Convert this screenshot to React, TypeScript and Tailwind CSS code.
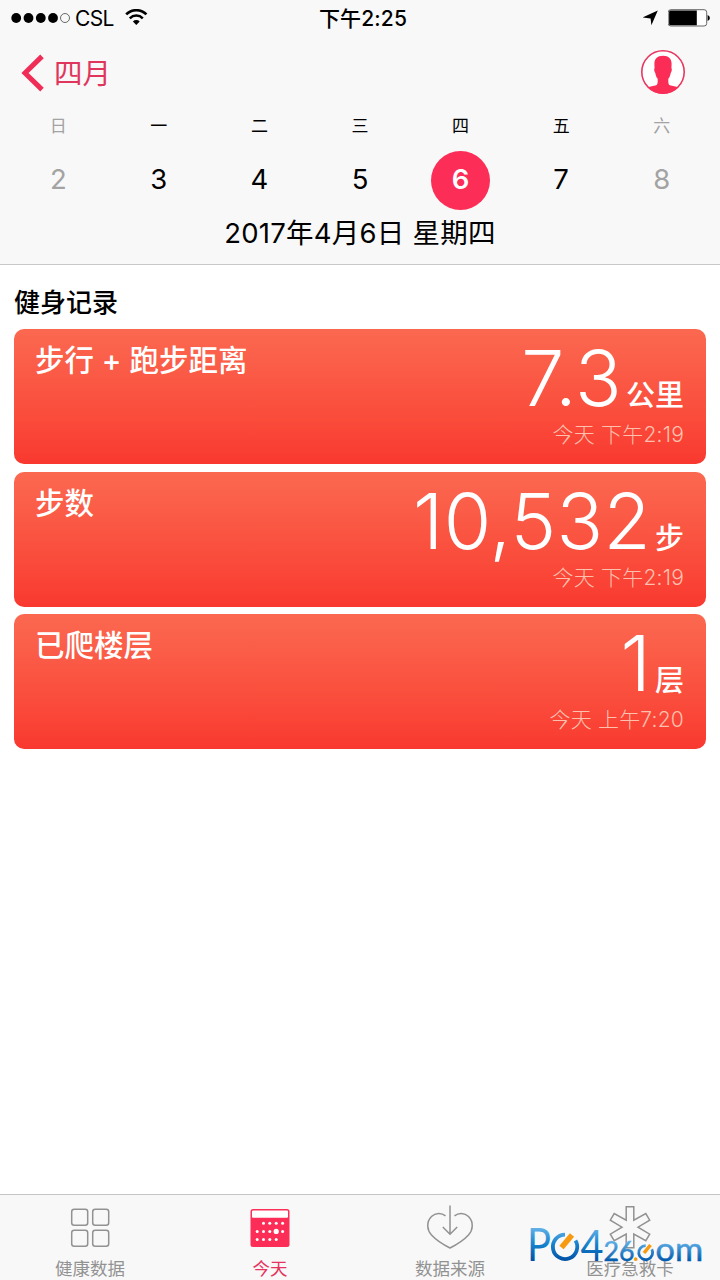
import type { ReactNode } from "react";
import clsx from "clsx";

interface Day {
  name: string;
  date: number;
  weekend?: boolean;
  selected?: boolean;
}

interface Metric {
  label: string;
  value: string;
  unit: string;
  time: string;
}

const days: Day[] = [
  { name: "日", date: 2, weekend: true },
  { name: "一", date: 3 },
  { name: "二", date: 4 },
  { name: "三", date: 5 },
  { name: "四", date: 6, selected: true },
  { name: "五", date: 7 },
  { name: "六", date: 8, weekend: true },
];

const metrics: Metric[] = [
  { label: "步行 + 跑步距离", value: "7.3", unit: "公里", time: "今天 下午2:19" },
  { label: "步数", value: "10,532", unit: "步", time: "今天 下午2:19" },
  { label: "已爬楼层", value: "1", unit: "层", time: "今天 上午7:20" },
];

function StatusBar() {
  return (
    <div className="grid h-9 grid-cols-3 items-center pr-[9px] pl-[11px] text-black">
      <div className="flex items-center">
        <svg width="60" height="12" viewBox="0 0 60 12">
          {[5.2, 17.5, 29.8, 42].map((cx) => (
            <circle key={cx} cx={cx} cy="6" r="4.9" />
          ))}
          <circle cx="54" cy="6" r="4.5" fill="none" stroke="#444" strokeWidth="0.8" />
        </svg>
        <span className="ml-1 text-[21px] leading-none tracking-[-0.6px]">CSL</span>
        <svg className="ml-[11px]" width="23" height="18" viewBox="0 0 23 18" fill="none" stroke="#000">
          <path d="M1.2 5.4a14.3 14.3 0 0 1 20.2 0" strokeWidth="2.7" />
          <path d="M4.8 9.3a9.2 9.2 0 0 1 13 0" strokeWidth="2.5" />
          <path d="M11.3 16L7.9 12.5a4.8 4.8 0 0 1 6.8 0Z" fill="#000" stroke="none" />
        </svg>
      </div>
      <div className="pl-1 text-center text-[21px] leading-none font-medium tracking-[0.15px] whitespace-nowrap">
        下午2:25
      </div>
      <div className="flex items-center justify-end">
        <svg width="16" height="16" viewBox="0 0 16 16">
          <path d="M14.8 0.5L8.4 15.3L7.6 8.6L-0.6 7.4Z" />
        </svg>
        <svg className="ml-[9px]" width="43" height="18" viewBox="0 0 43 18">
          <rect x="0.2" y="0.7" width="38.5" height="16.3" rx="2.6" fill="#fff" stroke="#555" strokeWidth="0.9" />
          <path d="M2.5 1.5h26.3v14.8H2.5a1.4 1.4 0 0 1-1.4-1.4V2.9A1.4 1.4 0 0 1 2.5 1.5Z" />
          <path d="M39.6 6q2.3 0.8 2.3 3t-2.3 3Z" />
        </svg>
      </div>
    </div>
  );
}

function NavBar() {
  return (
    <div className="flex h-[72px] items-center justify-between pr-[34px] pl-[21px] text-[#e0355d]">
      <div className="flex items-center pt-0.5">
        <svg width="24" height="38" viewBox="0 0 24 38" fill="none" stroke="#ef2d57" strokeWidth="5">
          <path d="M21 2.4L4 19L21 35.6" />
        </svg>
        <span className="ml-[9px] pt-[3px] text-[28.5px] leading-none">四月</span>
      </div>
      <svg width="46" height="46" viewBox="0 0 46 46">
        <circle cx="23" cy="23" r="21.2" fill="#fff" stroke="#e8375f" strokeWidth="1.6" />
        <path
          fill="#fb2d57"
          d="M23 6.8c-5.8 0-8.7 3.2-8.6 8.4l.2 4.1c-.7 0-.5 3.3.7 4.6.4 2.6 1.2 4.4 2.3 5.7.3 3.5.1 5.8-1.4 6.7L7.4 38.2A21.5 21.5 0 0 0 38.6 38.2L29.8 36.3c-1.5-.9-1.7-3.2-1.4-6.7 1.1-1.3 1.9-3.1 2.3-5.7 1.2-1.3 1.4-4.6.7-4.6l.2-4.1c.1-5.2-2.8-8.4-8.6-8.4Z"
        />
      </svg>
    </div>
  );
}

function WeekStrip() {
  return (
    <div className="grid grid-cols-7 px-2">
      {days.map((day) => (
        <div
          key={day.name}
          className={clsx("flex flex-col items-center", day.weekend ? "text-[#a3a3a3]" : "text-black")}
        >
          <span className="flex h-[43px] items-center pb-[7px] text-[17px] leading-none">{day.name}</span>
          <span
            className={clsx(
              "flex size-[59px] items-center justify-center rounded-full pb-px text-[27.5px] leading-none",
              day.selected && "bg-[#fc2d56] font-semibold text-white"
            )}
          >
            {day.date}
          </span>
        </div>
      ))}
    </div>
  );
}

function MetricCard({ label, value, unit, time }: Metric) {
  return (
    <div className="flex h-[135px] justify-between rounded-[10px] bg-linear-to-b from-[#fb6850] to-[#f9382f] pr-[22px] pl-[21px] text-white">
      <span className="mt-4 text-[29.5px] leading-[30px] font-medium">{label}</span>
      <div className="flex flex-col items-end">
        <div className="mt-2 flex h-[83px] items-baseline">
          <span className="text-[77px] leading-[82px] font-light tracking-[0.3px]">{value}</span>
          <span className="ml-1 text-[29px] leading-none font-medium">{unit}</span>
        </div>
        <span className="mt-1 text-[21px] leading-[22px] font-light tracking-[0.2px] text-[#ffc0ad]">{time}</span>
      </div>
    </div>
  );
}

function TabItem({ label, active, children }: { label: string; active?: boolean; children: ReactNode }) {
  return (
    <div className={clsx("flex flex-1 flex-col items-center", active ? "text-[#e5345e]" : "text-[#929292]")}>
      <svg className="mt-2" width="50" height="50" viewBox="0 0 50 50" fill="none" stroke="currentColor" strokeWidth="1.5">
        {children}
      </svg>
      <span className="mt-[7px] text-[17.5px] leading-[18px]">{label}</span>
    </div>
  );
}

// Rows of the calendar icon: y and the x of each dot
const calendarDots = [
  { y: 20.3, xs: [18.5, 24.8, 31.2, 37.6] },
  { y: 28.4, xs: [12.2, 18.5, 24.8, 37.6] },
  { y: 36.4, xs: [12.2, 18.5, 24.8, 31.2] },
];

function TabBar() {
  return (
    <div className="flex h-[86px] border-t border-[#c4c4c4] bg-[#f8f8f8]">
      <TabItem label="健康数据">
        <rect x="6.7" y="6.2" width="16" height="16" rx="2.5" />
        <rect x="27.7" y="6.2" width="16" height="16" rx="2.5" />
        <rect x="6.7" y="27.2" width="16" height="16" rx="2.5" />
        <rect x="27.7" y="27.2" width="16" height="16" rx="2.5" />
      </TabItem>
      <TabItem label="今天" active>
        <rect x="5.5" y="6" width="39" height="38" rx="2.5" fill="#fc2d56" stroke="none" />
        <rect x="7" y="7.5" width="36" height="7.3" rx="1" fill="#fff" stroke="none" />
        {calendarDots.map((row) =>
          row.xs.map((x) => <circle key={`${x}-${row.y}`} cx={x} cy={row.y} r="1.5" fill="#fff" stroke="none" />)
        )}
        <circle cx="31.2" cy="28.4" r="2.6" fill="#fff" stroke="none" />
      </TabItem>
      <TabItem label="数据来源">
        <path d="M20.5 12.8C16.5 9.6 10.5 9.5 6.5 13.5C1 19 2 27 6.5 32C12 38 20 42.5 25 45C30 42.5 38 38 43.5 32C48 27 49 19 43.5 13.5C39.5 9.5 33.5 9.6 29.5 12.8" />
        <path d="M25 2.5V31M17.8 24L25 31.2L32.2 24" />
      </TabItem>
      <TabItem label="医疗急救卡">
        <path d="M21.2 3.7H28.8V17.2L40.8 10.5L44.7 17.2L33 24.2L44.7 31.2L40.8 37.7L28.8 31V44.7H21.2V31L9.2 37.7L5.3 31.2L17 24.2L5.3 17.2L9.2 10.5L21.2 17.2Z" />
      </TabItem>
    </div>
  );
}

function Watermark() {
  return (
    <svg
      className="absolute right-4 bottom-3 overflow-visible font-['Lato']"
      width="178"
      height="46"
      viewBox="0 0 178 46"
    >
      <defs>
        <linearGradient id="blue" gradientUnits="userSpaceOnUse" x1="0" y1="4" x2="0" y2="39">
          <stop offset="0" stopColor="#6db7ea" />
          <stop offset="0.5" stopColor="#1884ce" />
          <stop offset="1" stopColor="#0050a4" />
        </linearGradient>
        <linearGradient id="blueSmall" gradientUnits="userSpaceOnUse" x1="0" y1="19" x2="0" y2="39">
          <stop offset="0" stopColor="#62b2e9" />
          <stop offset="1" stopColor="#0059ac" />
        </linearGradient>
      </defs>
      <g fill="url(#blue)">
        <text x="1" y="38.5" fontSize="47" textLength="24" lengthAdjust="spacingAndGlyphs">P</text>
        <text x="54.5" y="38.5" fontSize="42" textLength="23" lengthAdjust="spacingAndGlyphs">4</text>
      </g>
      <path d="M39 12.6A12.2 12.2 0 1 0 49.5 18.5" fill="none" stroke="url(#blue)" strokeWidth="3.8" />
      <path d="M35.5 25.5L46 13" stroke="#f79a10" strokeWidth="5.5" />
      <g fill="url(#blueSmall)" stroke="url(#blueSmall)" strokeWidth="0.5">
        <text x="77.5" y="38.5" fontSize="27" textLength="31" lengthAdjust="spacingAndGlyphs">26</text>
        <text x="129.5" y="38.5" fontSize="32.5" textLength="47.5" lengthAdjust="spacingAndGlyphs">om</text>
      </g>
      <text x="106.5" y="38.5" fontSize="28" fill="#f79a10">.</text>
      <path d="M119.7 23.6A7 7 0 1 0 125.8 27.2" fill="none" stroke="url(#blueSmall)" strokeWidth="2.8" />
      <path d="M118 31L124.5 23" stroke="#f79a10" strokeWidth="3.5" />
    </svg>
  );
}

export default function App() {
  return (
    <div className="relative flex h-[1280px] w-[720px] flex-col overflow-hidden bg-white font-['Inter','Noto_Sans_CJK_SC',sans-serif]">
      <header className="h-[265px] border-b border-[#c8c8c8] bg-[#f8f8f8]">
        <StatusBar />
        <NavBar />
        <WeekStrip />
        <div className="mt-[9px] text-center text-[27.5px] leading-[28px] tracking-[0.25px] text-black">
          2017年4月6日 星期四
        </div>
      </header>
      <main className="flex-1 px-3.5">
        <h2 className="mt-6 text-[26px] leading-[28px] font-medium text-black">健身记录</h2>
        <div className="mt-3 flex flex-col gap-[7.5px]">
          {metrics.map((metric) => (
            <MetricCard key={metric.label} {...metric} />
          ))}
        </div>
      </main>
      <TabBar />
      <Watermark />
    </div>
  );
}
